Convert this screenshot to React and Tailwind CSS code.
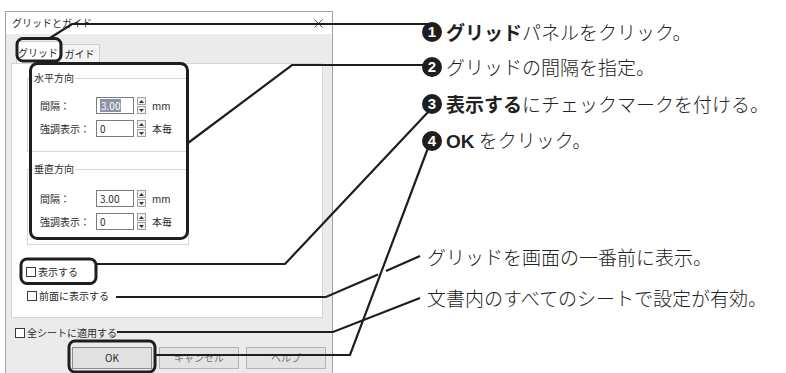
import React from 'react'

function Spin() {
  return (
    <div className="ml-[3px] flex h-[17px] w-[9px] flex-col gap-px">
      <div className="flex flex-1 items-center justify-center border border-[#a0a0a0] bg-[#f3f3f3]">
        <svg width="5" height="3" viewBox="0 0 5 3"><path d="M0 3 L2.5 0 L5 3Z" fill="#333" /></svg>
      </div>
      <div className="flex flex-1 items-center justify-center border border-[#a0a0a0] bg-[#f3f3f3]">
        <svg width="5" height="3" viewBox="0 0 5 3"><path d="M0 0 L2.5 3 L5 0Z" fill="#333" /></svg>
      </div>
    </div>
  )
}

function Field({ label, value, unit, selected }) {
  return (
    <div className="flex h-[17px] items-center">
      <span className="w-[56px] text-[10px] leading-[14px]">{label}</span>
      <div className="flex h-[17px] w-[38px] items-center border border-[#7c7c7c] bg-white pl-[3px] text-[10px] leading-[13px]">
        {selected ? <span className="bg-[#8d93a6] px-px text-white">{value}</span> : value}
      </div>
      <Spin />
      <span className="ml-[6px] text-[10px] leading-[14px]">{unit}</span>
    </div>
  )
}

function Group({ title, className, children }) {
  return (
    <div className={`relative ml-[15px] w-[162px] border border-[#d6d6d6] pl-[12px] ${className}`}>
      <span className="absolute -top-[8px] left-[5px] bg-white px-px text-[10px] leading-[14px]">{title}</span>
      {children}
    </div>
  )
}

function Check({ label, className }) {
  return (
    <div className={`flex h-[12px] items-center ${className}`}>
      <span className="h-[10px] w-[10px] border border-[#3a3a3a] bg-white" />
      <span className="ml-[2px] text-[10px] leading-[12px]">{label}</span>
    </div>
  )
}

function Step({ n, className, children }) {
  return (
    <div className={`flex h-[24px] items-center ${className}`}>
      <span className="relative z-10 flex h-[20px] w-[20px] items-center justify-center rounded-full bg-[#1e1e1e] font-['Liberation_Sans',sans-serif] text-[15px] font-bold text-white">{n}</span>
      <span className="ml-[4px] text-[19px] font-light leading-[24px] text-[#222]">{children}</span>
    </div>
  )
}

export default function App() {
  return (
    <div className="relative flex h-[373px] w-[786px] overflow-hidden bg-white font-['Noto_Sans_CJK_JP',sans-serif] text-[#2b2b2b]">
      {/* dialog */}
      <div className="ml-[5px] mt-[11px] flex h-[372px] w-[328px] shrink-0 flex-col border border-[#a3a3a3] bg-[#ebebeb]">
        <div className="flex h-[22px] items-center justify-between bg-white pl-[6px] pr-[9px]">
          <span className="text-[10px] leading-[14px]">グリッドとガイド</span>
          <svg width="9" height="9" viewBox="0 0 9 9"><path d="M0.5 0.5 L8.5 8.5 M8.5 0.5 L0.5 8.5" stroke="#555" strokeWidth="1" /></svg>
        </div>

        <div className="ml-[10px] mt-[7px] flex h-[22px] items-end">
          <div className="flex h-[22px] w-[44px] items-center justify-center border border-b-0 border-[#cfcfcf] bg-white text-[10px] leading-[14px]">グリッド</div>
          <div className="flex h-[19px] w-[40px] items-center justify-center border border-b-0 border-l-0 border-[#cfcfcf] bg-[#f4f4f4] text-[10px] leading-[14px]">ガイド</div>
        </div>

        <div className="ml-[5px] flex h-[255px] w-[312px] flex-col border border-[#d5d5d5] bg-white">
          <Group title="水平方向" className="mt-[14px] h-[74px] pt-[18px]">
            <div className="flex flex-col gap-[6px]">
              <Field label="間隔：" value="3.00" unit="mm" selected />
              <Field label="強調表示：" value="0" unit="本毎" />
            </div>
          </Group>
          <Group title="垂直方向" className="mt-[17px] h-[76px] pt-[20px]">
            <div className="flex flex-col gap-[6px]">
              <Field label="間隔：" value="3.00" unit="mm" />
              <Field label="強調表示：" value="0" unit="本毎" />
            </div>
          </Group>
          <Check label="表示する" className="ml-[14px] mt-[21px]" />
          <Check label="前面に表示する" className="ml-[15px] mt-[12px]" />
        </div>

        <Check label="全シートに適用する" className="ml-[9px] mt-[9px]" />

        <div className="ml-[66px] mt-[8px] flex gap-[7px] text-[10px] leading-[14px]">
          <div className="flex h-[22px] w-[80px] items-center justify-center border border-[#8c8c8c] bg-[#e1e1e1]">OK</div>
          <div className="flex h-[22px] w-[80px] items-center justify-center border border-[#b3b3b3] bg-[#e3e3e3] text-[#777]">キャンセル</div>
          <div className="flex h-[22px] w-[80px] items-center justify-center border border-[#b3b3b3] bg-[#e3e3e3] text-[#777]">ヘルプ</div>
        </div>
      </div>

      {/* steps */}
      <div className="ml-[89px] flex flex-col">
        <Step n="1" className="mt-[20px]"><b className="font-bold">グリッド</b>パネルをクリック。</Step>
        <Step n="2" className="mt-[11px]">グリッドの間隔を指定。</Step>
        <Step n="3" className="mt-[13px]"><b className="font-bold">表示する</b>にチェックマークを付ける。</Step>
        <Step n="4" className="mt-[13px]"><b className="font-['Liberation_Sans',sans-serif] font-bold">OK</b> をクリック。</Step>
        <p className="ml-[5px] mt-[92px] text-[19px] font-light leading-[24px] text-[#222]">グリッドを画面の一番前に表示。</p>
        <p className="ml-[5px] mt-[17px] text-[19px] font-light leading-[24px] text-[#222]">文書内のすべてのシートで設定が有効。</p>
      </div>

      {/* callouts */}
      <svg className="pointer-events-none absolute inset-0" width="786" height="373">
        <g fill="none" stroke="#1e1e1e" strokeWidth="3">
          <rect x="17" y="38.5" width="44" height="22.5" rx="6" />
          <rect x="30.5" y="63.5" width="157" height="175" rx="7" />
          <rect x="21" y="259" width="75" height="24.5" rx="6" />
          <rect x="69" y="341" width="86" height="31" rx="6" />
        </g>
        <g fill="none" stroke="#1e1e1e" strokeWidth="2.2">
          <polyline points="50,38 72,24 428,24" />
          <polyline points="188,143 292,65 426,65" />
          <polyline points="96,264 285,264 430,110" />
          <polyline points="156,355 350,355 428,148" />
          <polyline points="116,297 326,297 378,274.5" />
          <polyline points="386,271 420,256" />
          <polyline points="117,332 333,332 420,298" />
        </g>
      </svg>
    </div>
  )
}
